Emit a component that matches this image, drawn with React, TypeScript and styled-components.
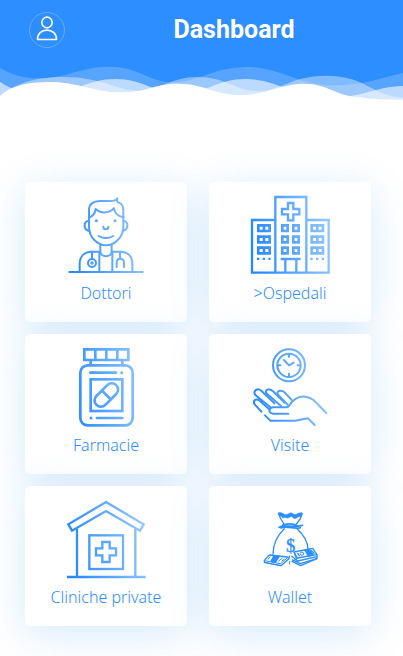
import React from "react";
import styled, { createGlobalStyle } from "styled-components";

const BLUE = "#2d8eff";

const GlobalStyle = createGlobalStyle`
  *, *::before, *::after { box-sizing: border-box; }
  body {
    margin: 0;
    background: #fff;
    font-family: "Noto Sans", "Open Sans", sans-serif;
    color: ${BLUE};
  }
`;

const Page = styled.div`
  display: flex;
  flex-direction: column;
`;

const Header = styled.header`
  background: ${BLUE};
`;

const HeaderBar = styled.div`
  display: flex;
  align-items: center;
  height: 60px;
  padding-left: 29px;
`;

const AvatarButton = styled.button`
  display: flex;
  align-items: center;
  justify-content: center;
  width: 36px;
  height: 36px;
  padding: 0 0 4px;
  border: 1px solid rgba(255, 255, 255, 0.25);
  border-radius: 50%;
  background: transparent;
  color: #fff;
  cursor: pointer;
`;

const Title = styled.h1`
  flex: 1;
  margin: 0;
  text-align: center;
  font-family: Roboto, "Noto Sans", sans-serif;
  font-size: 25px;
  line-height: 32px;
  font-weight: 700;
  color: #fff;
`;

const Waves = styled.svg`
  display: block;
  width: 100%;
  height: 40px;
  fill: #fff;
`;

const Menu = styled.nav`
  padding: 82px 32px 30px 25px;
`;

const Grid = styled.ul`
  display: grid;
  grid-template-columns: 1fr 1fr;
  gap: 12px 22px;
  margin: 0;
  padding: 0;
  list-style: none;
`;

const Card = styled.a`
  display: flex;
  flex-direction: column;
  align-items: center;
  gap: 7px;
  padding: 13px 8px 18px;
  border-radius: 5px;
  background: #fff;
  box-shadow: 0 8px 40px rgba(30, 140, 235, 0.18);
  color: ${BLUE};
  text-decoration: none;
`;

const CardLabel = styled.span`
  font-size: 16px;
  line-height: 22px;
  font-weight: 300;
`;

const IconSvg = styled.svg`
  display: block;
  width: 80px;
  height: 80px;
  fill: none;
  stroke-linecap: round;
  stroke-linejoin: round;
`;

interface IconProps {
  id: string;
  viewBox: string;
  width?: number;
  square?: boolean;
  children: React.ReactNode;
}

function GradientIcon({ id, viewBox, width = 6, square, children }: IconProps) {
  return (
    <IconSvg viewBox={viewBox} aria-hidden="true">
      <defs>
        <linearGradient id={id} gradientUnits="userSpaceOnUse" x1="20" y1="150" x2="255" y2="110">
          <stop offset="0" stopColor="#2488ff" />
          <stop offset="1" stopColor="#94c8ff" />
        </linearGradient>
      </defs>
      <g
        stroke={`url(#${id})`}
        strokeWidth={width}
        strokeLinecap={square ? "butt" : "round"}
        strokeLinejoin={square ? "miter" : "round"}
      >
        {children}
      </g>
    </IconSvg>
  );
}

function DoctorIcon() {
  return (
    <GradientIcon id="doctor" viewBox="18 15 240 240">
      <path d="M28 246.100L248 246" />
      <path d="M87 80V110C87 142 113 166 138 166S190 142 190 110V80" />
      <path d="M86 93C69 92 70 123 88 122M190 93C207 92 206 123 188 122" />
      <path d="M87 83V60C87 40 100 33 122 33H150C162 33 169 31 172 25C170 33 172 37 177 38C187 42 190 50 190 62V83" />
      <path d="M87 83C99 79 105 71 107 57C122 72 150 70 162 54C163 68 174 79 190 82" />
      <path d="M109 92h.1M165 92h.1" strokeWidth="9" />
      <path d="M130 110a7.500 7.500 0 0 0 15 0M116 138C130 146 146 146 160 138" />
      <path d="M121 164V184C121 204 155 204 155 184V164" />
      <path d="M59 244V222C59 200 72 187 92 185H120M156 185H184C205 187 217 200 217 222V244" />
      <path d="M118 188V244M157 188V244M96 187V206M180 187V206" />
      <circle cx="96" cy="219" r="12" />
      <circle cx="96" cy="219" r="3" strokeWidth="4" />
      <path d="M170 231V220C170 202 192 202 192 220V231" />
    </GradientIcon>
  );
}

function HospitalIcon() {
  const rows = [106, 140, 173];
  return (
    <GradientIcon id="hospital" viewBox="15 15 240 240" width={7} square>
      <path d="M90 90H21V248H251V90H185" />
      <path d="M91 248V21H184V248" />
      <path d="M129 39h16v18h18v16h-18v18h-16v-18h-18v-16h18z" />
      {rows.map((y) => (
        <React.Fragment key={y}>
          <path d={`M112 ${y}h16v17h-16zM145 ${y}h16v17h-16z`} strokeWidth="8" />
          <path
            d={`M40 ${y}h17v17h-17zM57 ${y}h17v17h-17zM200 ${y}h17v17h-17zM217 ${y}h17v17h-17z`}
            strokeWidth="8"
          />
        </React.Fragment>
      ))}
      <path d="M36 206.500h7M53 206.500h7M70 206.500h7M196 206.500h7M213 206.500h7M230 206.500h7" />
      <path d="M107 207.100L167 207M121 208V248M154 208V248" />
    </GradientIcon>
  );
}

function PillsIcon() {
  return (
    <GradientIcon id="pills" viewBox="18 21 240 240" width={8} square>
      <path d="M73 28H205V60H73zM106 28V60M139 28V60M172 28V60M92 60V75M187 60V75" />
      <rect x="61" y="76" width="157" height="180" rx="22" />
      <rect x="92" y="118" width="95" height="95" />
      <path d="M91 98.100L168 98M111 234.100L187 234" strokeLinecap="round" />
      <path d="M185 98h.1M93 234h.1" strokeLinecap="round" strokeWidth="9" />
      <g transform="rotate(-45 139 165)">
        <rect x="97" y="146" width="84" height="38" rx="19" />
        <path d="M139 146V184" />
      </g>
    </GradientIcon>
  );
}

function VisitIcon() {
  return (
    <GradientIcon id="visit" viewBox="15 21 240 240" width={6}>
      <circle cx="132" cy="76" r="48" />
      <circle cx="132" cy="76" r="35" />
      <path d="M132 42V51M132 101V110M98 76H106M158 76H166M117 60L132 76L146 68" />
      <path d="M130 221H85C69 219 70 203 85 202H124C132 202 134 194 139 188C152 173 167 168 181 170C206 173 214 191 244 219" />
      <path d="M78 203L31 165C22 153 38 142 49 152L88 190" />
      <path d="M108 198L64 160C58 147 76 145 84 154L119 188" />
      <path d="M128 194L98 163C94 149 112 150 119 157L141 181" />
      <path d="M49 215L29 193C21 180 35 174 45 183L72 207" />
      <path d="M60 226L76 242H150L189 235L209 255" />
    </GradientIcon>
  );
}

function ClinicIcon() {
  return (
    <GradientIcon id="clinic" viewBox="18 27 240 240" width={7} square>
      <path d="M138 36L251 103L240 122L138 63L36 122L25 103Z" />
      <path d="M51 116V260M226 116V260M21 261.100L257 261" />
      <rect x="88" y="136" width="101" height="101" />
      <path d="M127 156h22v19h19v21h-19v20h-22v-20h-19v-21h19z" />
    </GradientIcon>
  );
}

const DollarMark = styled.text`
  font-family: "Liberation Serif", serif;
  font-size: 56px;
  font-weight: 400;
  fill: ${BLUE};
  stroke: ${BLUE};
  stroke-width: 1px;
`;

function MoneyBagIcon() {
  return (
    <IconSvg viewBox="15 -3 240 240" stroke={BLUE} strokeWidth={4} aria-hidden="true">
      <path d="M100 39C108 34 117 45 123 44C132 43 135 34 145 42C153 48 160 36 172 39L167 50C158 45 151 65 142 50C134 47 130 59 120 51C113 59 111 47 105 48Z" fill={BLUE} strokeWidth="2" />
      <path d="M101 40C104 54 111 63 117 72M171 40C170 54 162 63 154 72" />
      <path d="M102 82C117 72 143 84 172 76M113 75C130 70 146 71 157 77M108 84C126 76 148 89 166 83" strokeWidth="5" />
      <path d="M118 86C97 106 84 128 84 163M156 86C175 103 188 124 189 147" />
      <DollarMark x="123" y="157" aria-hidden="true">$</DollarMark>
      <path d="M73 165L58 181V187L108 197L132 176L128 171Z" fill="#fff" />
      <path d="M58 182L107 191L129 172M60 188L108 197" strokeWidth="3" />
      <path d="M87 167L78 184L91 187L103 169Z" fill={BLUE} />
      <path d="M75 171L69 178M112 174L101 183M118 177L111 183" strokeWidth="3" />
      <path d="M147 156L203 145L216 164V176L167 197L141 184L155 177Z" fill="#fff" />
      <path d="M147 156L157 174L215 164M140 169L158 183L216 170M143 180L166 191L215 176" />
      <path d="M179 150L192 148L204 164L191 169Z" fill={BLUE} />
      <path d="M158 160L163 167M198 151L207 160" strokeWidth="4" />
      <circle cx="171" cy="161" r="5" strokeWidth="3" />
      <path d="M133 168V174M134 184V192" strokeWidth="3" />
    </IconSvg>
  );
}

const items = [
  { label: "Dottori", href: "#dottori", icon: <DoctorIcon /> },
  { label: ">Ospedali", href: "#ospedali", icon: <HospitalIcon /> },
  { label: "Farmacie", href: "#farmacie", icon: <PillsIcon /> },
  { label: "Visite", href: "#visite", icon: <VisitIcon /> },
  { label: "Cliniche private", href: "#cliniche", icon: <ClinicIcon /> },
  { label: "Wallet", href: "#wallet", icon: <MoneyBagIcon /> },
];

export default function App() {
  return (
    <Page>
      <GlobalStyle />
      <Header>
        <HeaderBar>
          <AvatarButton type="button" aria-label="Profilo">
            <svg width="22" height="25" viewBox="0 0 22 25" fill="none" stroke="currentColor" strokeWidth="1.600" strokeLinejoin="round" aria-hidden="true">
              <ellipse cx="11" cy="6.500" rx="5.200" ry="5.400" />
              <path d="M1.500 23.500C1.500 11 20.500 11 20.500 23.500Z" />
            </svg>
          </AvatarButton>
          <Title>Dashboard</Title>
        </HeaderBar>
        <Waves viewBox="0 0 1206 120" preserveAspectRatio="none" aria-hidden="true">
          <path
            opacity="0.2"
            d="M0 24C35 42 65 55 115 55C200 55 240 20 330 20C415 20 445 67 520 67C590 67 640 21 740 21C840 21 890 76 1000 76C1080 76 1140 55 1206 38V120H0Z"
          />
          <path
            opacity="0.4"
            d="M0 108C50 70 100 51 190 51C310 51 340 92 420 92C480 92 510 51 590 51C680 51 700 93 775 93C840 93 870 47 975 47C1100 47 1110 108 1206 113V120H0Z"
          />
          <path
            opacity="0.6"
            d="M0 65C25 82 60 100 130 100C230 100 260 57 345 57C430 57 460 100 540 100C620 100 650 57 735 57C830 57 880 113 980 113C1090 113 1120 80 1206 78V120H0Z"
          />
          <path d="M0 108C30 78 80 66 150 66C235 66 280 97 365 97C440 97 460 71 535 71C610 71 640 105 720 105C800 105 840 71 910 71C980 71 1010 109 1070 111C1120 118 1160 119 1206 119V121H0Z" />
        </Waves>
      </Header>
      <Menu aria-label="Dashboard">
        <Grid>
          {items.map((item) => (
            <li key={item.label}>
              <Card href={item.href}>
                {item.icon}
                <CardLabel>{item.label}</CardLabel>
              </Card>
            </li>
          ))}
        </Grid>
      </Menu>
    </Page>
  );
}
